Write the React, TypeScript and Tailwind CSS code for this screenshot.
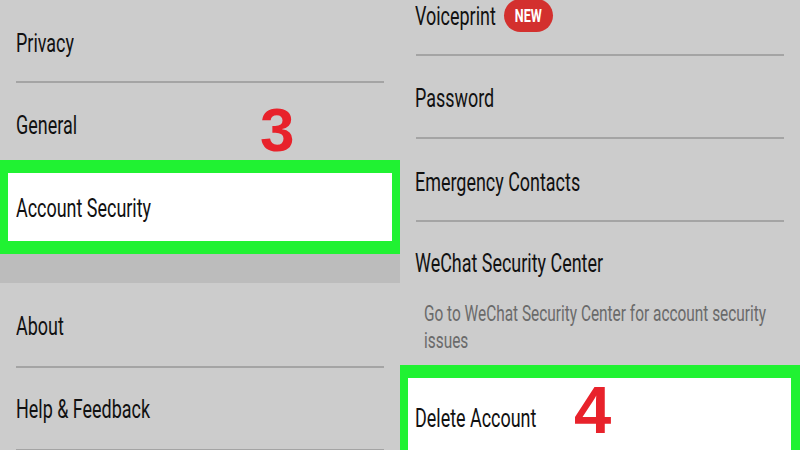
const font = { fontFamily: "Roboto, 'Liberation Sans', sans-serif" };

function Label({ children }: { children: React.ReactNode }) {
  // the screenshot is squeezed horizontally, so the text is too
  return (
    <span className="inline-block origin-left scale-x-[0.69] whitespace-nowrap text-[26px] leading-[30px] text-[#111111]">
      {children}
    </span>
  );
}

function Divider() {
  return <div className="mx-[16px] h-[2px] bg-[#a4a4a4]" />;
}

function Step({ n, className }: { n: string; className: string }) {
  return (
    <span
      className={`absolute text-[#e8222b] font-bold leading-none ${className}`}
      style={{ fontFamily: "'Liberation Sans', Arial, sans-serif" }}
    >
      {n}
    </span>
  );
}

export default function App() {
  return (
    <div className="flex h-[450px] w-[800px] overflow-hidden bg-[#cccccc]" style={font}>
      {/* Settings list */}
      <div className="relative w-[400px] shrink-0">
        <div className="h-[81px] px-[16px] pt-[28px]">
          <Label>Privacy</Label>
        </div>
        <Divider />
        <div className="h-[77px] px-[16px] pt-[27px]">
          <Label>General</Label>
        </div>
        <div className="h-[94px] border-x-[8px] border-y-[13px] border-[#20f232] bg-white pl-[8px] pt-[20px]">
          <Label>Account Security</Label>
        </div>
        <div className="h-[29px] bg-[#bcbcbc]" />
        <div className="h-[83px] px-[16px] pt-[28px]">
          <Label>About</Label>
        </div>
        <Divider />
        <div className="h-[81px] px-[16px] pt-[26px]">
          <Label>Help &amp; Feedback</Label>
        </div>
        <Divider />
        <Step n="3" className="left-[260px] top-[99px] text-[62px]" />
      </div>

      {/* Account security list */}
      <div className="relative w-[400px] shrink-0">
        <div className="relative h-[54px] px-[15px] pt-[1px]">
          <Label>Voiceprint</Label>
          <span className="absolute left-[104px] top-[-1px] flex h-[33px] w-[49px] items-center justify-center rounded-full bg-[#d3302e]">
            <span className="inline-block scale-x-[0.7] text-[18px] font-bold leading-none text-white">NEW</span>
          </span>
        </div>
        <Divider />
        <div className="h-[81px] px-[15px] pt-[27px]">
          <Label>Password</Label>
        </div>
        <Divider />
        <div className="h-[81px] px-[15px] pt-[28px]">
          <Label>Emergency Contacts</Label>
        </div>
        <Divider />
        <div className="h-[143px] px-[15px] pt-[26px]">
          <Label>WeChat Security Center</Label>
          <p className="mt-[21px] ml-[9px] w-[520px] origin-left scale-x-[0.7] text-[22px] leading-[27px] text-[#6a6a6a]">
            Go to WeChat Security Center for account security issues
          </p>
        </div>
        <div className="h-[100px] border-l-[8px] border-r-[9px] border-t-[13px] border-[#20f232] bg-white pl-[7px] pt-[25px]">
          <Label>Delete Account</Label>
        </div>
        <Step n="4" className="left-[174px] top-[376px] text-[67px]" />
      </div>
    </div>
  );
}
